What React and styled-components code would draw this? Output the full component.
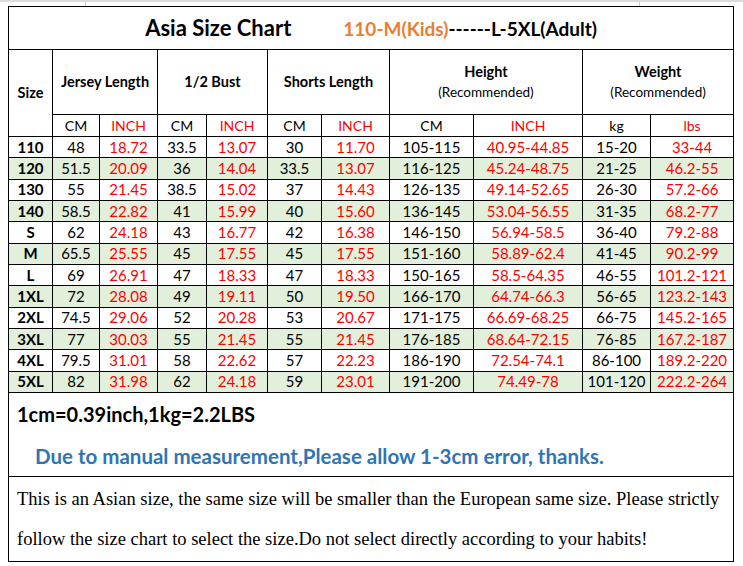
import React from 'react'
import styled, { createGlobalStyle } from 'styled-components'

const GlobalStyle = createGlobalStyle`
  html, body {
    margin: 0;
    padding: 0;
    background: #fff;
  }
  body {
    font-family: Lato, "Liberation Sans", sans-serif;
    color: #000;
  }
`

const rows = [
  ['110', '48', '18.72', '33.5', '13.07', '30', '11.70', '105-115', '40.95-44.85', '15-20', '33-44'],
  ['120', '51.5', '20.09', '36', '14.04', '33.5', '13.07', '116-125', '45.24-48.75', '21-25', '46.2-55'],
  ['130', '55', '21.45', '38.5', '15.02', '37', '14.43', '126-135', '49.14-52.65', '26-30', '57.2-66'],
  ['140', '58.5', '22.82', '41', '15.99', '40', '15.60', '136-145', '53.04-56.55', '31-35', '68.2-77'],
  ['S', '62', '24.18', '43', '16.77', '42', '16.38', '146-150', '56.94-58.5', '36-40', '79.2-88'],
  ['M', '65.5', '25.55', '45', '17.55', '45', '17.55', '151-160', '58.89-62.4', '41-45', '90.2-99'],
  ['L', '69', '26.91', '47', '18.33', '47', '18.33', '150-165', '58.5-64.35', '46-55', '101.2-121'],
  ['1XL', '72', '28.08', '49', '19.11', '50', '19.50', '166-170', '64.74-66.3', '56-65', '123.2-143'],
  ['2XL', '74.5', '29.06', '52', '20.28', '53', '20.67', '171-175', '66.69-68.25', '66-75', '145.2-165'],
  ['3XL', '77', '30.03', '55', '21.45', '55', '21.45', '176-185', '68.64-72.15', '76-85', '167.2-187'],
  ['4XL', '79.5', '31.01', '58', '22.62', '57', '22.23', '186-190', '72.54-74.1', '86-100', '189.2-220'],
  ['5XL', '82', '31.98', '62', '24.18', '59', '23.01', '191-200', '74.49-78', '101-120', '222.2-264'],
]

const widths = [44, 47, 58, 49, 61, 54, 68, 84, 109, 68, 83]
const units = ['CM', 'INCH', 'CM', 'INCH', 'CM', 'INCH', 'CM', 'INCH', 'kg', 'lbs']

export default function App() {
  return (
    <>
      <GlobalStyle />
      <TopStrip>
        <GridCell />
        <GridCell />
        <div />
      </TopStrip>
      <Page>
        <Chart>
          <colgroup>
            {widths.map((w, i) => (
              <col key={i} style={{ width: w }} />
            ))}
          </colgroup>
          <tbody>
            <tr>
              <TitleCell colSpan={11}>
                <Title>Asia Size Chart</Title>
                <SubTitle>
                  <Orange>110-M(Kids)</Orange>------L-5XL(Adult)
                </SubTitle>
              </TitleCell>
            </tr>
            <tr>
              <HeadCell rowSpan={2}>Size</HeadCell>
              <HeadCell colSpan={2}>Jersey Length</HeadCell>
              <HeadCell colSpan={2}>1/2 Bust</HeadCell>
              <HeadCell colSpan={2}>Shorts Length</HeadCell>
              <HeadCell colSpan={2}>
                Height
                <Note>(Recommended)</Note>
              </HeadCell>
              <HeadCell colSpan={2}>
                Weight
                <Note>(Recommended)</Note>
              </HeadCell>
            </tr>
            <tr>
              {units.map((u, i) => (
                <UnitCell key={i} $red={i % 2 === 1}>
                  {u}
                </UnitCell>
              ))}
            </tr>
            {rows.map((r, ri) => (
              <DataRow key={r[0]} $shade={ri % 2 === 1}>
                <SizeCell>{r[0]}</SizeCell>
                {r.slice(1).map((v, i) => (
                  <DataCell key={i} $red={i % 2 === 1}>
                    {v}
                  </DataCell>
                ))}
              </DataRow>
            ))}
            <tr>
              <NotesCell colSpan={11}>
                <Conversion>1cm=0.39inch,1kg=2.2LBS</Conversion>
                <Warning>Due to manual measurement,Please allow 1-3cm error, thanks.</Warning>
              </NotesCell>
            </tr>
            <tr>
              <AdviceCell colSpan={11}>
                This is an Asian size, the same size will be smaller than the European same size. Please strictly
                <br />
                follow the size chart to select the size.Do not select directly according to your habits!
              </AdviceCell>
            </tr>
          </tbody>
        </Chart>
      </Page>
    </>
  )
}

const TopStrip = styled.div`
  display: grid;
  grid-template-columns: 86px 554px 1fr;
  height: 4px;
  border-top: 2px solid #dcdcdc;
`

const GridCell = styled.div`
  border-right: 1px solid #d0d0d0;
`

const Page = styled.div`
  padding-left: 8px;
`

const Chart = styled.table`
  width: 726px;
  table-layout: fixed;
  border-collapse: collapse;

  td {
    border: 1px solid #000;
    padding: 0;
    text-align: center;
    line-height: 1;
  }
`

const TitleCell = styled.td`
  height: 42px;
  white-space: nowrap;
`

const Title = styled.span`
  font-size: 22px;
  font-weight: 700;
  margin-right: 52px;
`

const SubTitle = styled.span`
  font-size: 19px;
  font-weight: 700;
`

const Orange = styled.span`
  color: #ed7d31;
`

const HeadCell = styled.td`
  height: 64px;
  font-size: 14.5px;
  font-weight: 700;
`

const Note = styled.div`
  font-size: 13.5px;
  font-weight: 400;
  margin-top: 7px;
`

const UnitCell = styled.td`
  height: 21px;
  font-size: 14px;
  color: ${(p) => (p.$red ? '#f00' : '#000')};
`

const DataRow = styled.tr`
  height: 21.33px;
  background: ${(p) => (p.$shade ? '#e2efda' : '#fff')};
`

const DataCell = styled.td`
  font-size: 15px;
  color: ${(p) => (p.$red ? '#f00' : '#000')};
`

const SizeCell = styled.td`
  font-size: 15px;
  font-weight: 700;
`

const NotesCell = styled.td`
  height: 83px;
  && {
    text-align: left;
    vertical-align: top;
  }
`

const Conversion = styled.div`
  font-size: 20px;
  font-weight: 700;
  padding: 11px 0 0 8px;
`

const Warning = styled.div`
  font-size: 20.5px;
  font-weight: 700;
  color: #2e75b6;
  padding: 22px 0 0 26px;
  white-space: nowrap;
`

const AdviceCell = styled.td`
  height: 84px;
  && {
    text-align: left;
    line-height: 40px;
  }
  padding-left: 8px !important;
  font-family: "Liberation Serif", "Times New Roman", serif;
  font-size: 18.5px;
  white-space: nowrap;
`
